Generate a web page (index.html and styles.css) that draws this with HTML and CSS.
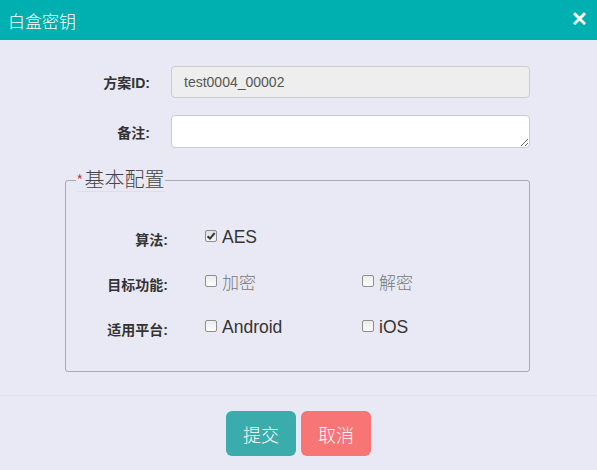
FILE: index.html
```html
<!DOCTYPE html>
<html lang="zh">
<head>
<meta charset="utf-8">
<title>白盒密钥</title>
<link rel="stylesheet" href="styles.css">
</head>
<body>
<div class="dialog">
  <header class="head">
    <span class="title">白盒密钥</span>
    <span class="close">✕</span>
  </header>
  <main class="body">
    <div class="row">
      <label class="lbl">方案ID:</label>
      <input class="ctl ctl-ro" type="text" value="test0004_00002" readonly>
    </div>
    <div class="row row2">
      <label class="lbl">备注:</label>
      <textarea class="ctl ctl-ta"></textarea>
    </div>
    <fieldset class="group">
      <legend class="legend"><span class="req">*</span>基本配置</legend>
      <div class="opt-row first">
        <span class="olbl">算法:</span>
        <span class="opt"><span class="cb checked"><svg viewBox="0 0 12 12" width="12" height="12"><path d="M2.6 6.2 L5 8.6 L9.6 3.2" fill="none" stroke="#333" stroke-width="2"/></svg></span><span class="otext">AES</span></span>
      </div>
      <div class="opt-row">
        <span class="olbl">目标功能:</span>
        <span class="opt"><span class="cb"></span><span class="otext cjk">加密</span></span>
        <span class="opt"><span class="cb"></span><span class="otext cjk">解密</span></span>
      </div>
      <div class="opt-row">
        <span class="olbl">适用平台:</span>
        <span class="opt"><span class="cb"></span><span class="otext">Android</span></span>
        <span class="opt"><span class="cb"></span><span class="otext">iOS</span></span>
      </div>
    </fieldset>
  </main>
  <footer class="foot">
    <button class="btn btn-ok">提交</button>
    <button class="btn btn-cancel">取消</button>
  </footer>
</div>
</body>
</html>
```
FILE: styles.css
```css
html, body {
  margin: 0;
  padding: 0;
  background: #e9e9f5;
}
body {
  font-family: "Liberation Sans", "Noto Sans CJK SC", sans-serif;
  color: #333;
  width: 597px;
  height: 470px;
  overflow: hidden;
}
.head {
  height: 40px;
  background: #00afaf;
  display: flex;
  align-items: center;
  justify-content: space-between;
  padding: 0 9px 0 8px;
  color: #fff;
}
.title {
  font-family: "Noto Sans CJK SC", sans-serif;
  font-size: 17px;
  font-weight: 300;
}
.close {
  font-size: 20px;
  font-weight: bold;
  line-height: 1;
  margin-top: -3px;
}
.body {
  padding-top: 26px;
  padding-bottom: 23px;
  border-bottom: 1px solid #e2e2ea;
}
.row {
  display: flex;
  align-items: center;
}
.row2 {
  margin-top: 17px;
}
.lbl {
  width: 150px;
  text-align: right;
  font-weight: bold;
  font-size: 14px;
  margin-right: 21px;
}
.ctl {
  box-sizing: border-box;
  width: 359px;
  border: 1px solid #ccc;
  border-radius: 4px;
  font-family: "Liberation Sans", sans-serif;
  font-size: 14px;
  color: #555;
  margin: 0;
}
.ctl-ro {
  height: 32px;
  padding: 0 12px;
  background: #eee;
  outline: none;
}
.ctl-ta {
  height: 33px;
  background: #fff;
  display: block;
  padding: 6px 12px;
}
.group {
  margin: 20px 0 0 65px;
  width: 465px;
  box-sizing: border-box;
  height: 204px;
  border: 1px solid #a9a9a9;
  border-radius: 3px;
  padding: 0 10px;
}
.legend {
  font-family: "Noto Sans CJK SC", sans-serif;
  font-size: 20px;
  font-weight: 300;
  line-height: 22px;
  padding: 0;
  color: #444;
  border-bottom: 1px solid #dedfea;
}
.req {
  color: #b33;
  font-size: 17px;
  margin-right: 1px;
}
.opt-row {
  display: flex;
  align-items: center;
  height: 45px;
}
.opt-row.first {
  margin-top: 22px;
}
.olbl {
  width: 92px;
  text-align: right;
  font-weight: bold;
  font-size: 14px;
  margin-top: 4px;
  margin-right: 37px;
}
.opt {
  display: flex;
  align-items: center;
  width: 157px;
}
.cb {
  width: 12px;
  height: 12px;
  box-sizing: border-box;
  border: 1px solid #8e8e8e;
  border-radius: 2px;
  background: linear-gradient(#ececec, #fdfdfd);
  display: inline-flex;
  margin-right: 5px;
  margin-top: -2px;
}
.cb svg {
  margin: -1px;
}
.cb.checked {
  background: linear-gradient(#dedede, #f4f4f4);
}
.otext {
  font-size: 17.5px;
  color: #333;
  line-height: 22px;
}
.otext.cjk {
  font-family: "Noto Sans CJK SC", sans-serif;
  font-weight: 300;
  color: #777;
  font-size: 17px;
}
.foot {
  display: flex;
  justify-content: center;
  gap: 5px;
  padding-top: 15px;
}
.btn {
  width: 70px;
  height: 45px;
  border: none;
  border-radius: 6px;
  color: #fff;
  font-family: "Noto Sans CJK SC", sans-serif;
  font-size: 18px;
  font-weight: 300;
  padding: 0;
}
.btn-ok {
  background: #3aacab;
}
.btn-cancel {
  background: #f77575;
}
```
